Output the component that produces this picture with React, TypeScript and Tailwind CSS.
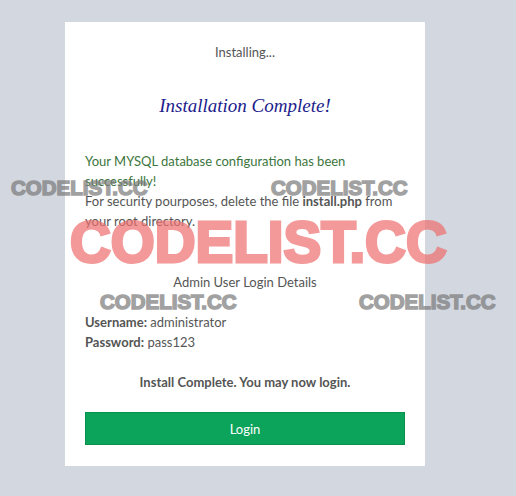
const Watermark = ({ pos, big }: { pos: string; big?: boolean }) => (
  <span
    className={
      big
        ? `absolute ${pos} text-[56.5px] text-[#ee6e6e] opacity-70 [-webkit-text-stroke:3px_#ee6e6e]`
        : `absolute ${pos} text-[20.5px] text-[#7a7a7a] opacity-70 [-webkit-text-stroke:1.5px_#7a7a7a]`
    }
  >
    CODELIST.CC
  </span>
);

export default function App() {
  return (
    <div className="relative w-[516px] h-[496px] bg-[#d3d8e0] pt-[22px] font-['Lato','Liberation_Sans',sans-serif]">
      <div className="ml-[65px] w-[360px] h-[444px] bg-white p-5 flex flex-col text-[13px] leading-5 text-[#555]">
        <p className="text-center">Installing...</p>
        <h1 className="mt-[33px] text-center font-['Liberation_Serif',serif] italic text-[19px] leading-[22px] text-[#1c1c8c]">
          Installation Complete!
        </h1>
        <div className="mt-[34px]">
          <p className="text-[#3c763d]">Your MYSQL database configuration has been successfully!</p>
          <p>
            For security pourposes, delete the file <b>install.php</b> from your root directory.
          </p>
        </div>
        <p className="mt-[41px] text-center">Admin User Login Details</p>
        <div className="mt-5">
          <p>
            <b>Username:</b> administrator
          </p>
          <p>
            <b>Password:</b> pass123
          </p>
        </div>
        <p className="mt-5 text-center font-bold">Install Complete. You may now login.</p>
        <button className="mt-5 w-full h-[33px] bg-[#0ba45a] border border-[#08904e] text-white text-[13px]">
          Login
        </button>
      </div>

      {/* watermark overlay */}
      <div className="pointer-events-none font-['Liberation_Sans',sans-serif] font-bold leading-none">
        <Watermark pos="left-[11px] top-[178px]" />
        <Watermark pos="left-[271px] top-[178px]" />
        <Watermark pos="left-[70px] top-[215px]" big />
        <Watermark pos="left-[100px] top-[292px]" />
        <Watermark pos="left-[359px] top-[292px]" />
      </div>
    </div>
  );
}
